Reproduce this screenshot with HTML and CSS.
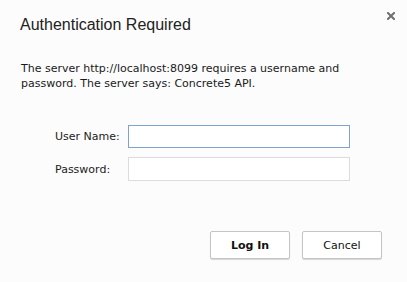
FILE: index.html
```html
<!DOCTYPE html>
<html>
<head>
<meta charset="utf-8">
<link rel="stylesheet" href="styles.css">
</head>
<body>
<div class="dialog">
  <div class="header">
    <h1 class="title">Authentication Required</h1>
    <svg class="close" width="8" height="8" viewBox="0 0 8 8"><path d="M1 1L7 7M7 1L1 7" stroke="#6f6f6f" stroke-width="2" stroke-linecap="square"/></svg>
  </div>
  <p class="message">The server http://localhost:8099 requires a username and password. The server says: Concrete5 API.</p>
  <div class="form">
    <label class="label">User Name:</label>
    <div class="input focused"></div>
    <label class="label">Password:</label>
    <div class="input"></div>
  </div>
  <div class="buttons">
    <button class="btn primary">Log In</button>
    <button class="btn">Cancel</button>
  </div>
</div>
</body>
</html>
```
FILE: styles.css
```css
html, body {
  margin: 0;
  padding: 0;
  background: #fcfcfd;
}
.dialog {
  width: 407px;
  height: 282px;
  box-sizing: border-box;
  padding: 13px 12px 0 20px;
  font-family: "DejaVu Sans", Verdana, sans-serif;
  color: #1a1a1a;
  display: flex;
  flex-direction: column;
}
.header {
  display: flex;
  justify-content: space-between;
  align-items: flex-start;
  height: 20px;
}
.title {
  margin: 2px 0 0 0;
  font-family: "Liberation Sans", Arial, sans-serif;
  font-weight: normal;
  font-size: 16px;
  line-height: 20px;
  color: #222;
}
.close {
  display: block;
  margin-top: -1px;
}
.message {
  margin: 28px 0 0 1px;
  font-size: 11px;
  line-height: 15px;
  width: 330px;
}
.form {
  margin: 34px 0 0 35px;
  display: grid;
  grid-template-columns: 73px 222px;
  grid-template-rows: 23px 24px;
  row-gap: 9px;
  align-items: center;
}
.label {
  font-size: 11px;
  color: #222;
}
.input {
  height: 100%;
  box-sizing: border-box;
  border: 1px solid #dcdcdc;
  background: #fff;
}
.input.focused {
  border-color: #7ea3cf;
}
.buttons {
  margin: 50px 0 0 190px;
  display: flex;
  gap: 12px;
}
.btn {
  width: 80px;
  height: 28px;
  box-sizing: border-box;
  background: #fff;
  border: 1px solid #c4c4c4;
  border-radius: 2px;
  box-shadow: 0 1px 1px rgba(0,0,0,0.15);
  font-family: "DejaVu Sans", Verdana, sans-serif;
  font-size: 11px;
  color: #111;
  padding: 0;
}
.btn.primary {
  font-weight: bold;
}
```
